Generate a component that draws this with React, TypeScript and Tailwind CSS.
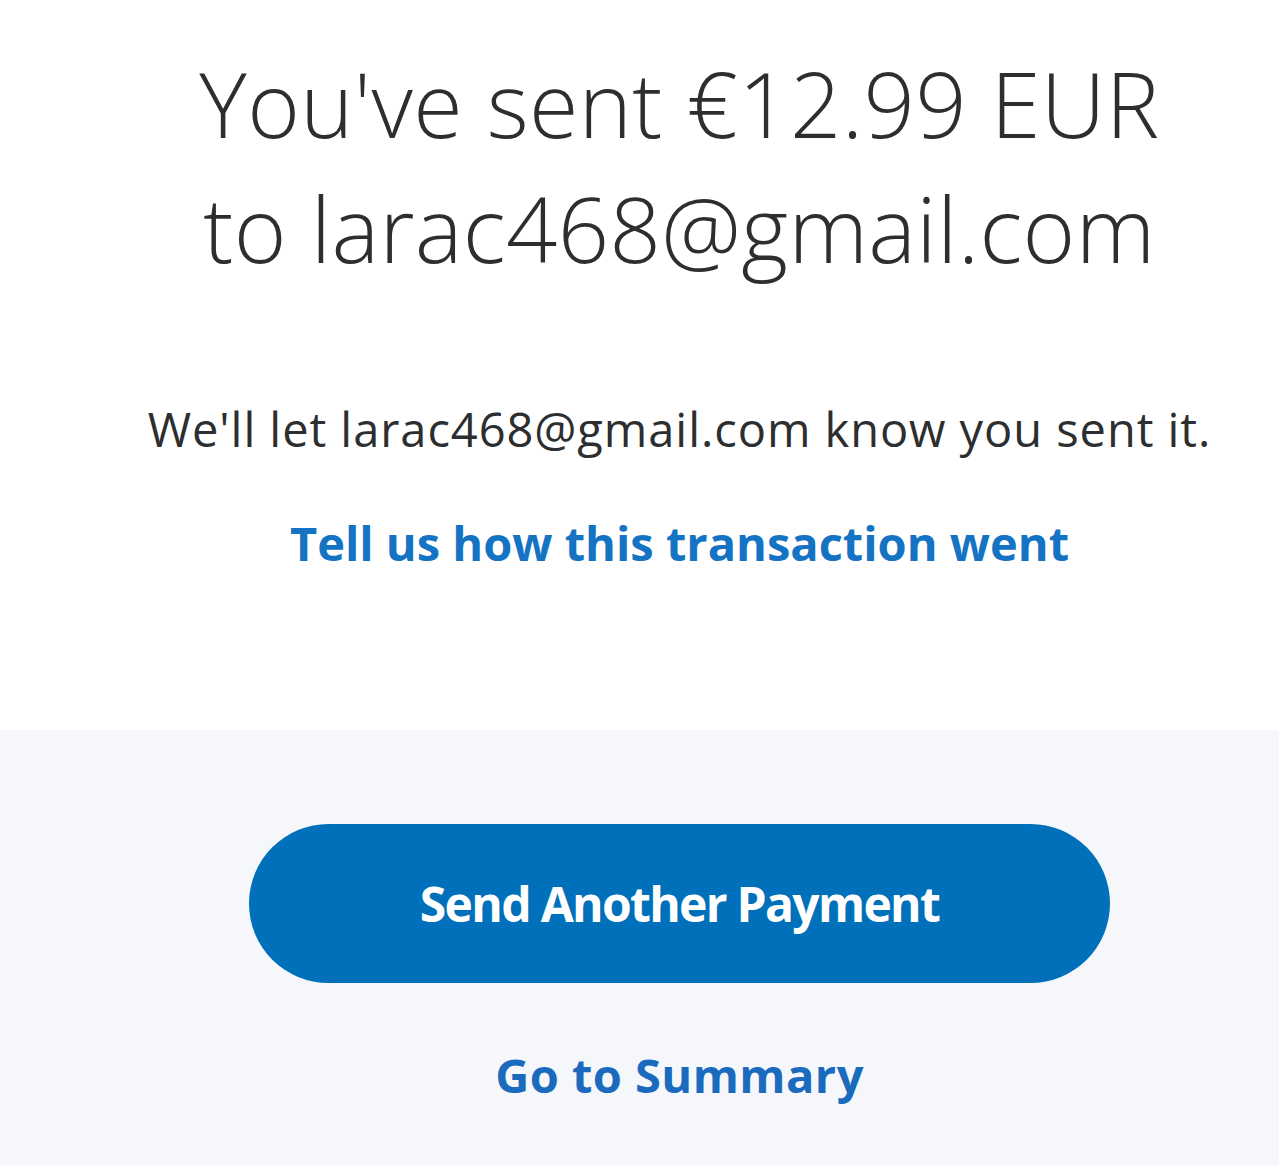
export default function App() {
  return (
    <div className="min-h-[1165px] w-full bg-[#f5f7fa] flex flex-col" style={{ fontFamily: '"Open Sans", "Liberation Sans", sans-serif' }}>
      {/* Confirmation message */}
      <section className="bg-white pl-[80px] pt-[41px] flex flex-col items-center text-center h-[730px]">
        <h1 className="text-[90px] leading-[125px] font-light tracking-[0.004em] text-[#2c2e2f]">
          You've sent €12.99 EUR
          <br />
          to larac468@gmail.com
        </h1>
        <p className="mt-[108px] text-[47px] leading-[60px] tracking-[0.02em] text-[#2c2e2f]">
          We'll let larac468@gmail.com know you sent it.
        </p>
        <a href="#" className="mt-[54px] text-[47px] leading-[60px] font-bold tracking-normal text-[#1473c3]">
          Tell us how this transaction went
        </a>
      </section>

      {/* Actions */}
      <section className="flex-1 pl-[80px] pt-[94px] flex flex-col items-center">
        <button className="w-[861px] h-[159px] rounded-full bg-[#0070ba] text-white text-[48px] font-bold tracking-[-0.035em]">
          Send Another Payment
        </button>
        <a href="#" className="mt-[62px] text-[47px] leading-[60px] font-bold tracking-[0.01em] text-[#1a6bbd]">
          Go to Summary
        </a>
      </section>
    </div>
  );
}
